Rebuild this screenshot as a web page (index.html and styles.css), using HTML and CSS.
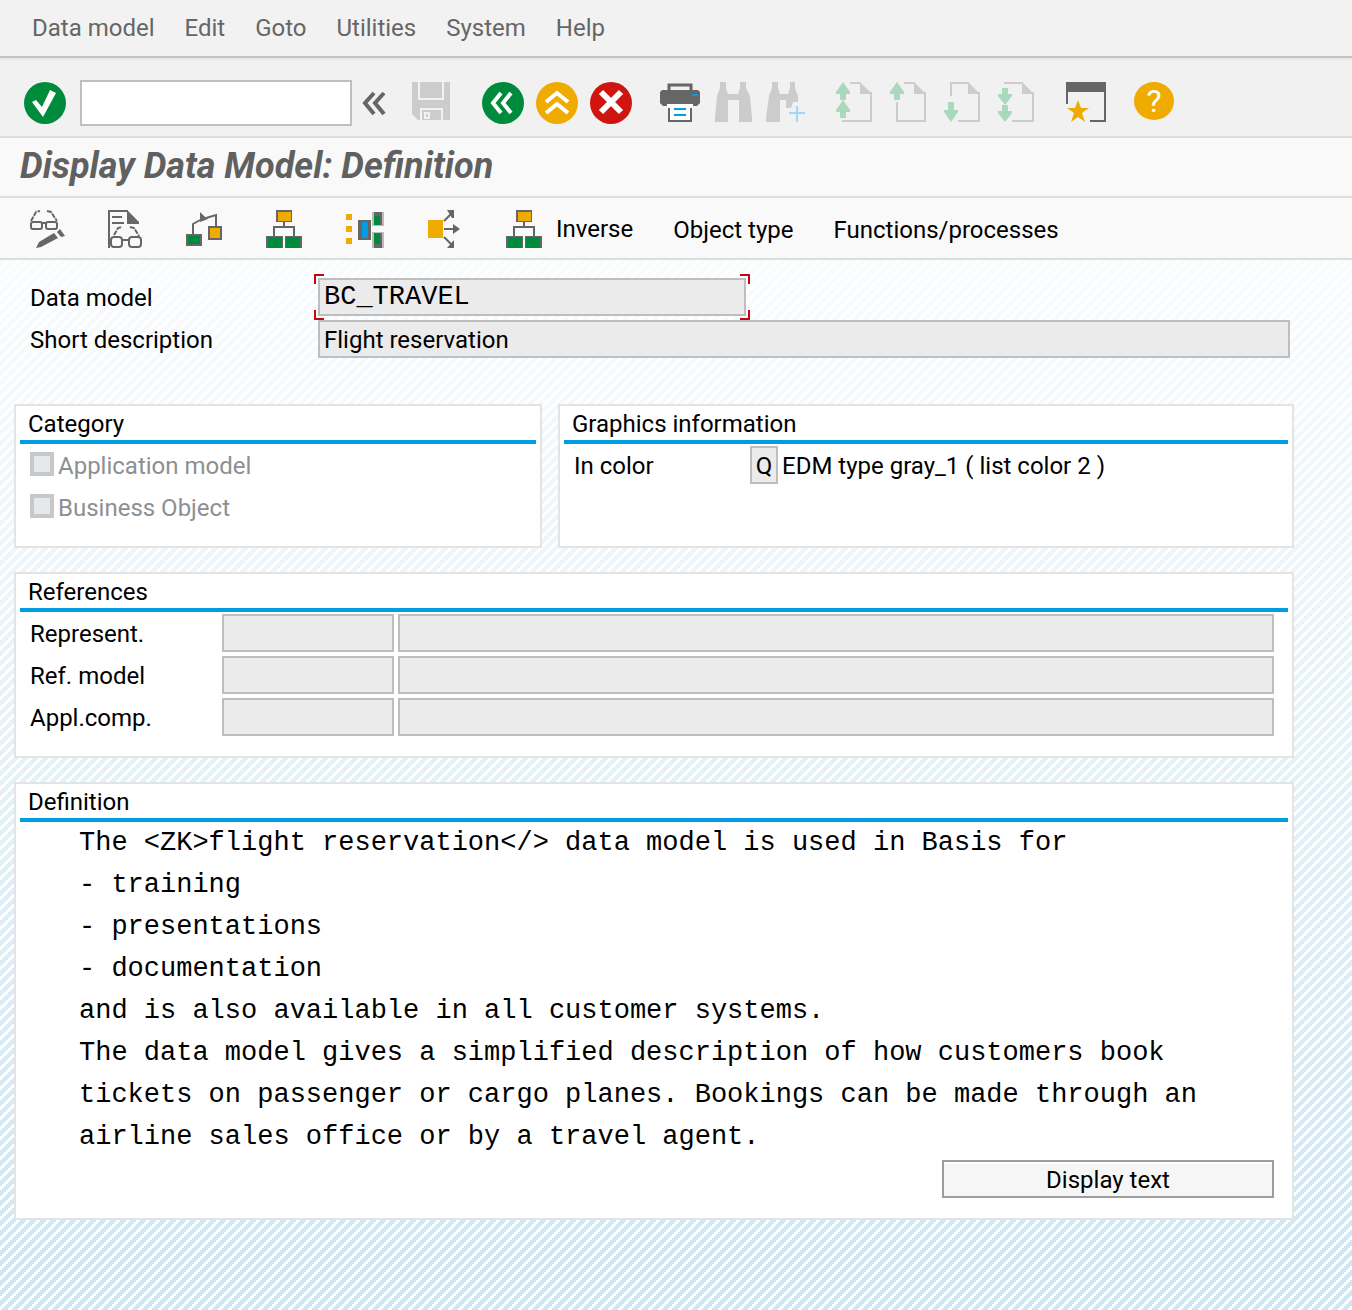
FILE: index.html
```html
<!DOCTYPE html>
<html lang="en">
<head>
<meta charset="utf-8">
<meta name="viewport" content="width=device-width, initial-scale=1">
<title>Display Data Model: Definition</title>
<link rel="stylesheet" href="styles.css">
</head>
<body>
<svg class="sprite" aria-hidden="true">
  <symbol id="hierarchy" viewBox="0 0 40 40">
    <path d="M18 12v5M8 26v-9h20v9" fill="none" stroke="#666" stroke-width="2"/>
    <path d="M10 0h16v12H10zM0 26h17v12H0zM19 26h17v12H19z" fill="#666"/>
    <path d="M12 2h13v9H12z" fill="#f0ab00"/>
    <path d="M2 27h14v11H2zM20 27h14v11H20z" fill="#008a3b"/>
  </symbol>
  <symbol id="page-fold" viewBox="0 0 42 42">
    <path d="M26 0l12 12H26z" fill="#ccc"/>
  </symbol>
</svg>

<nav class="menu" aria-label="Main menu">
  <button type="button">Data model</button>
  <button type="button">Edit</button>
  <button type="button">Goto</button>
  <button type="button">Utilities</button>
  <button type="button">System</button>
  <button type="button">Help</button>
</nav>

<div class="toolbar" role="toolbar" aria-label="Standard toolbar">
  <button type="button" aria-label="Enter"><svg viewBox="0 0 42 42"><circle cx="21" cy="21" r="21" fill="#008a3b"/><path d="M8 20l4-2 6 7 8-17 6 3-13 24z" fill="#fff"/></svg></button>
  <input class="command" type="text" aria-label="Command">
  <button class="toggle" type="button" aria-label="Hide command field"><svg viewBox="0 0 24 42"><path d="M12 11L3 21l9 11M22 11l-9 10 9 11" fill="none" stroke="#666" stroke-width="4"/></svg></button>
  <div class="group">
    <button class="save" type="button" aria-label="Save" disabled><svg viewBox="0 0 44 42"><path d="M0 0h38v38H6l-6-6z" fill="#ccc"/><path d="M7 0v17h24V0M9 38V27h21v11" fill="none" stroke="#f2f2f2" stroke-width="2"/><path d="M13 31h4v5h-4z" fill="none" stroke="#f2f2f2" stroke-width="2"/></svg></button>
  </div>
  <div class="group">
    <button type="button" aria-label="Back"><svg viewBox="0 0 42 42"><circle cx="21" cy="21" r="21" fill="#008a3b"/><path d="M19 11l-8 10 8 10M29 11l-8 10 8 10" fill="none" stroke="#fff" stroke-width="4"/></svg></button>
    <button type="button" aria-label="Exit"><svg viewBox="0 0 42 42"><circle cx="21" cy="21" r="21" fill="#f0ab00"/><path d="M10 20l11-9 11 9M10 31l11-9 11 9" fill="none" stroke="#fff" stroke-width="4"/></svg></button>
    <button type="button" aria-label="Cancel"><svg viewBox="0 0 42 42"><circle cx="21" cy="21" r="21" fill="#d0140f"/><path d="M11 10l20 20M31 10L11 30" stroke="#fff" stroke-width="6"/></svg></button>
  </div>
  <div class="group">
    <button type="button" aria-label="Print"><svg viewBox="0 0 42 42"><path d="M11 9V3h22v6" fill="none" stroke="#666" stroke-width="3"/><path d="M4 8h36l2 2v11l-3 3H5l-3-3V10z" fill="#666"/><path d="M9 22h26v3H9z" fill="#fff"/><path d="M11 25h22v14H11z" fill="#fff"/><path d="M11 26v13h22V26" fill="none" stroke="#666" stroke-width="2"/><path d="M34 12h6v2h-6zM16 26h12v2H16zM16 32h12v2H16z" fill="#009de0"/></svg></button>
    <button type="button" aria-label="Find" disabled><svg viewBox="0 0 42 42"><path d="M8 0h6v6l2 6h10l2-6V0h6v6l4 8 2 22v4H27V18H16v22H3v-4l2-22 3-8z" fill="#ccc"/></svg></button>
    <button type="button" aria-label="Find next" disabled><svg viewBox="0 0 42 42"><path d="M6 0h6v6l2 6h8l2-6V0h5v6l3 8v6h-5l-2 6h-5v-8h-6v22H0v-4l3-22 3-8z" fill="#ccc"/><path d="M31 24v16M23 31h16" stroke="#a3d8f4" stroke-width="2"/></svg></button>
  </div>
  <div class="group">
    <button type="button" aria-label="First page" disabled><svg viewBox="0 0 42 42"><path d="M16 1h11M37 10v29H8" fill="none" stroke="#ccc" stroke-width="2"/><use href="#page-fold"/><path d="M9 0l7 10v2h-4v6H6v-6H2v-2zM9 18l7 10v2h-4v6H6v-6H2v-2z" fill="#a9d8bd"/></svg></button>
    <button type="button" aria-label="Previous page" disabled><svg viewBox="0 0 42 42"><path d="M16 1h11M37 10v29H9V20" fill="none" stroke="#ccc" stroke-width="2"/><use href="#page-fold"/><path d="M9 0l7 10v2h-4v6H6v-6H2v-2z" fill="#a9d8bd"/></svg></button>
    <button type="button" aria-label="Next page" disabled><svg viewBox="0 0 42 42"><path d="M9 14V1h18M37 10v29H16" fill="none" stroke="#ccc" stroke-width="2"/><use href="#page-fold"/><path d="M9 40l7-10v-2h-4v-8H6v8H2v2z" fill="#a9d8bd"/></svg></button>
    <button type="button" aria-label="Last page" disabled><svg viewBox="0 0 42 42"><path d="M8 1h19M37 10v29H16" fill="none" stroke="#ccc" stroke-width="2"/><use href="#page-fold"/><path d="M9 23l7-9v-2h-4V6H6v6H2v2zM9 40l7-9v-2h-4v-6H6v6H2v2z" fill="#a9d8bd"/></svg></button>
  </div>
  <div class="group">
    <button type="button" aria-label="Create session"><svg viewBox="0 0 42 42"><path d="M3 22V1M41 1v38H26" fill="none" stroke="#666" stroke-width="2"/><path d="M2 0h40v10H2z" fill="#666"/><path d="M14 18l3 8h8l-7 5 3 9-7-5-7 5 3-9-7-5h8z" fill="#f0ab00"/></svg></button>
  </div>
  <div class="group">
    <button type="button" aria-label="Help"><svg viewBox="0 0 42 42"><ellipse cx="22" cy="19" rx="20" ry="19" fill="#f0ab00"/><text x="22" y="30" text-anchor="middle" class="help-mark">?</text></svg></button>
  </div>
</div>

<header class="title"><h1>Display Data Model: Definition</h1></header>

<div class="app-toolbar" role="toolbar" aria-label="Application toolbar">
  <button type="button" aria-label="Display/Change"><svg viewBox="0 0 40 40"><g fill="none" stroke="#666" stroke-width="2"><rect x="5" y="12" width="11" height="7" rx="2"/><rect x="20" y="12" width="11" height="7" rx="2"/><path d="M16 13h4"/><path d="M5 11l5-9 4-1M21 1l4 1 6 9" stroke-dasharray="5 1"/></g><path d="M10 38l3-6 15-9 4 5-17 9zM31 22l3-3 5 7-4 1z" fill="#666"/></svg></button>
  <button type="button" aria-label="Display documentation"><svg viewBox="0 0 40 40"><g fill="none" stroke="#666" stroke-width="2"><path d="M3 38V1h19M6 7h10M6 13h12"/><rect x="5" y="27" width="11" height="10" rx="3"/><rect x="23" y="27" width="12" height="10" rx="3"/><path d="M16 30h7"/><path d="M8 25l4-7 4-1M24 17l4 1 5 8" stroke-dasharray="5 1"/></g><path d="M21 0l12 12v2H21z" fill="#666"/></svg></button>
  <button type="button" aria-label="Relationships"><svg viewBox="0 0 40 40"><path d="M7 24V14l9-5M20 8l10-3v12" fill="none" stroke="#666" stroke-width="2"/><path d="M14 2l4 4 4 3-8 3z" fill="#666"/><path d="M1 25h14v10H1z" fill="#008a3b" stroke="#666" stroke-width="2"/><path d="M23 17h12v12H23z" fill="#f0ab00" stroke="#666" stroke-width="2"/></svg></button>
  <button type="button" aria-label="Hierarchy"><svg viewBox="0 0 40 40"><use href="#hierarchy"/></svg></button>
  <button type="button" aria-label="Entity types"><svg viewBox="0 0 40 40"><path d="M0 4h6v6H0zM0 16h6v6H0zM0 28h6v6H0z" fill="#f0ab00"/><path d="M12 10h13v20H12z" fill="#666"/><path d="M16 12h6v16h-6z" fill="#009de0"/><path d="M26 2h12v14H26zM26 22h12v16H26z" fill="#bbb"/><path d="M28 2h8v13h-8zM28 23h8v15h-8z" fill="#666"/><path d="M28 6h6v9h-6zM28 24h6v10h-6z" fill="#008a3b"/></svg></button>
  <button type="button" aria-label="Where-used list"><svg viewBox="0 0 40 40"><path d="M2 10h15v18H2z" fill="#f0ab00"/><path d="M18 11l8-8M18 19h11M18 27l8 8" fill="none" stroke="#666" stroke-width="2"/><path d="M21 0h7v8h-2zM28 30v8h-7zM27 14l7 5-7 5z" fill="#666"/></svg></button>
  <button class="with-text" type="button"><svg viewBox="0 0 40 40" aria-hidden="true"><use href="#hierarchy"/></svg>Inverse</button>
  <button type="button">Object type</button>
  <button type="button">Functions/processes</button>
</div>

<main>
  <div class="head-fields">
    <label for="model">Data model</label>
    <div class="focus-frame"><input class="code" id="model" type="text" value="BC_TRAVEL" readonly></div>
    <label for="short">Short description</label>
    <input id="short" type="text" value="Flight reservation" readonly>
  </div>

  <div class="pair">
    <section class="panel">
      <h2>Category</h2>
      <div class="rows">
        <label class="check"><input type="checkbox" disabled>Application model</label>
        <label class="check"><input type="checkbox" disabled>Business Object</label>
      </div>
    </section>
    <section class="panel">
      <h2>Graphics information</h2>
      <div class="rows color-row">
        <label for="color">In color</label>
        <input id="color" type="text" value="Q" readonly>
        <output for="color">EDM type gray_1 ( list color 2 )</output>
      </div>
    </section>
  </div>

  <section class="panel">
    <h2>References</h2>
    <div class="rows references">
      <label for="rep">Represent.</label><input id="rep" type="text" readonly><input type="text" aria-label="Represent. text" readonly>
      <label for="ref">Ref. model</label><input id="ref" type="text" readonly><input type="text" aria-label="Ref. model text" readonly>
      <label for="comp">Appl.comp.</label><input id="comp" type="text" readonly><input type="text" aria-label="Appl.comp. text" readonly>
    </div>
  </section>

  <section class="panel">
    <h2>Definition</h2>
    <pre class="definition">The &lt;ZK&gt;flight reservation&lt;/&gt; data model is used in Basis for
- training
- presentations
- documentation
and is also available in all customer systems.
The data model gives a simplified description of how customers book
tickets on passenger or cargo planes. Bookings can be made through an
airline sales office or by a travel agent.</pre>
    <div class="actions"><button class="display-text" type="button">Display text</button></div>
  </section>
</main>
</body>
</html>
```
FILE: styles.css
```css
* { box-sizing: border-box; }

body {
  margin: 0;
  min-height: 100vh;
  display: flex;
  flex-direction: column;
  background: #fff;
  color: #000;
  font: 24px/36px Roboto, "Liberation Sans", sans-serif;
}

button, input {
  margin: 0;
  padding: 0;
  border: 0;
  border-radius: 0;
  background: none;
  color: inherit;
  font: inherit;
}

svg { display: block; }
.sprite { position: absolute; width: 0; height: 0; }

/* Menu bar */
.menu {
  display: flex;
  gap: 30px;
  height: 60px;
  padding: 0 32px 2px;
  border-bottom: 2px solid #e6e6e6;
  box-shadow: inset 0 -2px #c3c3c3;
  background: #f2f2f2;
  color: #666;
}

/* Standard toolbar */
.toolbar {
  display: flex;
  align-items: center;
  height: 78px;
  padding: 10px 24px 0;
  border-bottom: 2px solid #dedede;
  background: #f1f1f1;
}
.toolbar button { width: 42px; height: 42px; }
.toolbar svg { width: 100%; height: 100%; }
.toolbar .command {
  width: 272px;
  height: 46px;
  margin: 0 10px 0 14px;
  padding: 0 6px;
  border: 2px solid #bfbfbf;
  background: #fff;
}
.toolbar .toggle { width: 24px; }
.toolbar .save { width: 44px; }
.group { display: flex; gap: 12px; margin-left: 26px; }
.help-mark { font: 400 32px Roboto, sans-serif; fill: #fff; }

/* Title bar */
.title {
  height: 60px;
  padding: 0 20px;
  border-bottom: 2px solid #dedede;
  background: #f9f9f9;
}
.title h1 {
  margin: 0;
  color: #606060;
  font-size: 36px;
  font-weight: 700;
  font-style: italic;
  line-height: 56px;
}

/* Application toolbar */
.app-toolbar {
  display: flex;
  align-items: center;
  gap: 40px;
  height: 62px;
  padding: 4px 26px 0;
  border-bottom: 2px solid #dedede;
  background: #f9f9f9;
}
.app-toolbar svg { width: 40px; height: 40px; }
.app-toolbar .with-text { display: flex; gap: 10px; line-height: 38px; }

/* Work area: diagonal stripes that get stronger towards the bottom */
main {
  flex: 1;
  padding: 18px 58px 24px 14px;
  background:
    linear-gradient(#ffffffe0, #ffffff00 1000px),
    url("data:image/svg+xml,%3Csvg xmlns='http://www.w3.org/2000/svg' width='10' height='10' shape-rendering='crispEdges'%3E%3Cpath fill='%23cfe7f5' d='M0 0h6v2H0zM0 2h4v2H0zM8 2h2v2H8zM0 4h2v2H0zM6 4h4v2H6zM4 6h6v2H4zM2 8h6v2H2z'/%3E%3C/svg%3E");
}

label, output { padding-top: 2px; }

main input[type="text"] {
  width: 100%;
  min-width: 0;
  height: 38px;
  padding: 2px 4px 0;
  border: 2px solid #bebebe;
  background: #ebebeb;
}

.head-fields {
  display: grid;
  grid-template-columns: 288px 1fr;
  gap: 4px 0;
  margin-bottom: 46px;
  padding: 0 4px 0 16px;
}

/* Red corner brackets round the focused field */
.focus-frame { position: relative; width: 428px; height: 38px; }
.focus-frame::after {
  content: "";
  position: absolute;
  inset: -4px;
  pointer-events: none;
  --red: linear-gradient(#c4070b, #c4070b);
  background:
    var(--red) 0 0 / 10px 2px, var(--red) 0 0 / 2px 10px,
    var(--red) 100% 0 / 10px 2px, var(--red) 100% 0 / 2px 10px,
    var(--red) 0 100% / 10px 2px, var(--red) 0 100% / 2px 10px,
    var(--red) 100% 100% / 10px 2px, var(--red) 100% 100% / 2px 10px;
  background-repeat: no-repeat;
}
main input.code {
  display: block;
  padding: 0 4px;
  font-family: "Liberation Mono", monospace;
  font-size: 27px;
}

.pair {
  display: grid;
  grid-template-columns: 528fr 736fr;
  gap: 16px;
}
.panel {
  margin-bottom: 24px;
  padding-bottom: 20px;
  border: 2px solid #e4e4e4;
  background: #fff;
}
.panel h2 {
  margin: 0 4px;
  padding: 2px 0 0 8px;
  border-bottom: 4px solid #009de0;
  font-size: 24px;
  font-weight: 400;
  line-height: 32px;
}
.rows {
  display: grid;
  gap: 4px;
  padding: 2px 18px 0 14px;
}

.check {
  display: flex;
  align-items: center;
  gap: 4px;
  color: #8d8f92;
}
.check input {
  appearance: none;
  width: 24px;
  height: 24px;
  margin-bottom: 4px;
  border: 4px solid #c8c8c8;
  background: #e6e9ec;
}

.color-row { grid-template-columns: 172px 28px 1fr; }
main .color-row input[type="text"] { padding: 2px 0 0; text-align: center; }

.references { grid-template-columns: 188px 172px 1fr; }

.definition {
  margin: 0;
  padding-left: 63px;
  overflow-x: auto;
  font: 27px/42px "Liberation Mono", monospace;
}

.actions {
  display: flex;
  justify-content: flex-end;
  padding: 2px 18px 0;
}
.display-text {
  width: 332px;
  height: 38px;
  padding-top: 2px;
  border: 2px solid #9d9d9d;
  box-shadow: inset 0 2px #fff;
  background: #f6f6f6;
  line-height: 32px;
}
```
